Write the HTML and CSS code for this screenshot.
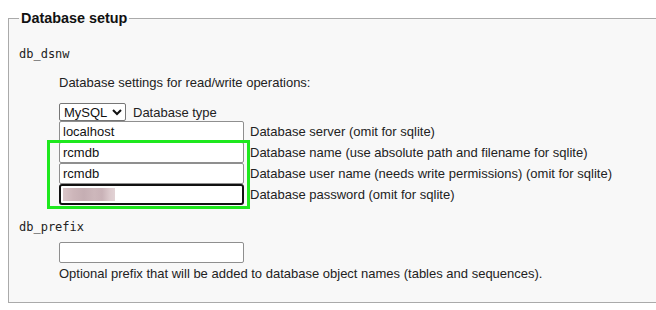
FILE: index.html
```html
<!DOCTYPE html>
<html lang="en">
<head>
    <meta charset="UTF-8">
    <title>Database setup</title>
    <link rel="stylesheet" href="styles.css">
</head>
<body>
    <fieldset class="setup">
        <legend>Database setup</legend>

        <div class="opt-name">db_dsnw</div>
        <div class="opt-body">
            <p class="hint first">Database settings for read/write operations:</p>
            <div class="dsn-grid">
                <div class="type-row">
                    <select class="db-type">
                        <option>MySQL</option>
                        <option>PostgreSQL</option>
                        <option>SQLite</option>
                    </select>
                    <span>Database type</span>
                </div>

                <input type="text" class="field" value="localhost">
                <span class="label">Database server (omit for sqlite)</span>

                <input type="text" class="field" value="rcmdb">
                <span class="label">Database name (use absolute path and filename for sqlite)</span>

                <input type="text" class="field" value="rcmdb">
                <span class="label">Database user name (needs write permissions) (omit for sqlite)</span>

                <div class="field password"><span class="blurred"></span></div>
                <span class="label">Database password (omit for sqlite)</span>

                <!-- highlight over the name/user/password inputs -->
                <div class="highlight"></div>
            </div>
        </div>

        <div class="opt-name second">db_prefix</div>
        <div class="opt-body">
            <input type="text" class="field prefix" value="">
            <p class="hint">Optional prefix that will be added to database object names (tables and sequences).</p>
        </div>
    </fieldset>
</body>
</html>
```

FILE: styles.css
```css
html {
    overflow: hidden;
}
body {
    margin: 0;
    padding: 10px 0 0 8px;
    background: #fff;
    font-family: "Liberation Sans", Arial, sans-serif;
    font-size: 13px;
    color: #222;
}
.setup {
    margin: 0;
    width: 700px;
    padding: 0 10px 20px 10px;
    border: 1px solid #aaa;
    background: #f8f8f8;
}
.setup legend {
    padding: 0 2px;
    font-size: 14.4px;
    font-weight: bold;
    line-height: 17px;
    color: #111;
}
.opt-name {
    margin-top: 20px;
    font-family: "DejaVu Sans Mono", monospace;
    font-size: 12px;
    line-height: 14px;
    color: #222;
}
.opt-name.second {
    margin-top: 15px;
}
.opt-body {
    margin-left: 40px;
}
.hint {
    margin: 3px 0 0;
    line-height: 16px;
}
.hint.first {
    margin: 14px 0 12px;
}
.dsn-grid {
    position: relative;
    display: grid;
    grid-template-columns: 185px auto;
    column-gap: 6px;
    align-items: center;
}
.type-row {
    grid-column: 1 / 3;
    display: flex;
    align-items: center;
    gap: 7px;
    height: 18px;
}
.db-type {
    width: 67px;
    height: 18px;
    padding: 0;
    margin: 0;
    font-family: "Liberation Sans", Arial, sans-serif;
    font-size: 13px;
    color: #111;
    background: #fff;
    border: 1px solid #767676;
    border-radius: 2px;
}
.field {
    box-sizing: border-box;
    width: 185px;
    height: 21px;
    margin: 0;
    padding: 0 3px;
    font-family: "Liberation Sans", Arial, sans-serif;
    font-size: 13px;
    color: #111;
    background: #fff;
    border: 1px solid #8f8f8f;
    border-radius: 2px;
}
.field.password {
    display: flex;
    align-items: center;
    border: 2px solid #111;
    border-radius: 3px;
    padding: 0 2px;
}
.blurred {
    width: 52px;
    height: 13px;
    background: linear-gradient(90deg, #d9c5c8 0, #cdb6ba 20%, #c5aeb3 40%, #cdb7bb 60%, #c9b2b7 75%, #dccacd 90%, #e2d3d5 100%);
}
.label {
    line-height: 16px;
}
.highlight {
    position: absolute;
    left: -12px;
    top: 37px;
    width: 203px;
    height: 69px;
    box-sizing: border-box;
    border: 3px solid #1ee81e;
    pointer-events: none;
}
.prefix {
    display: block;
    margin-top: 8px;
}
```
